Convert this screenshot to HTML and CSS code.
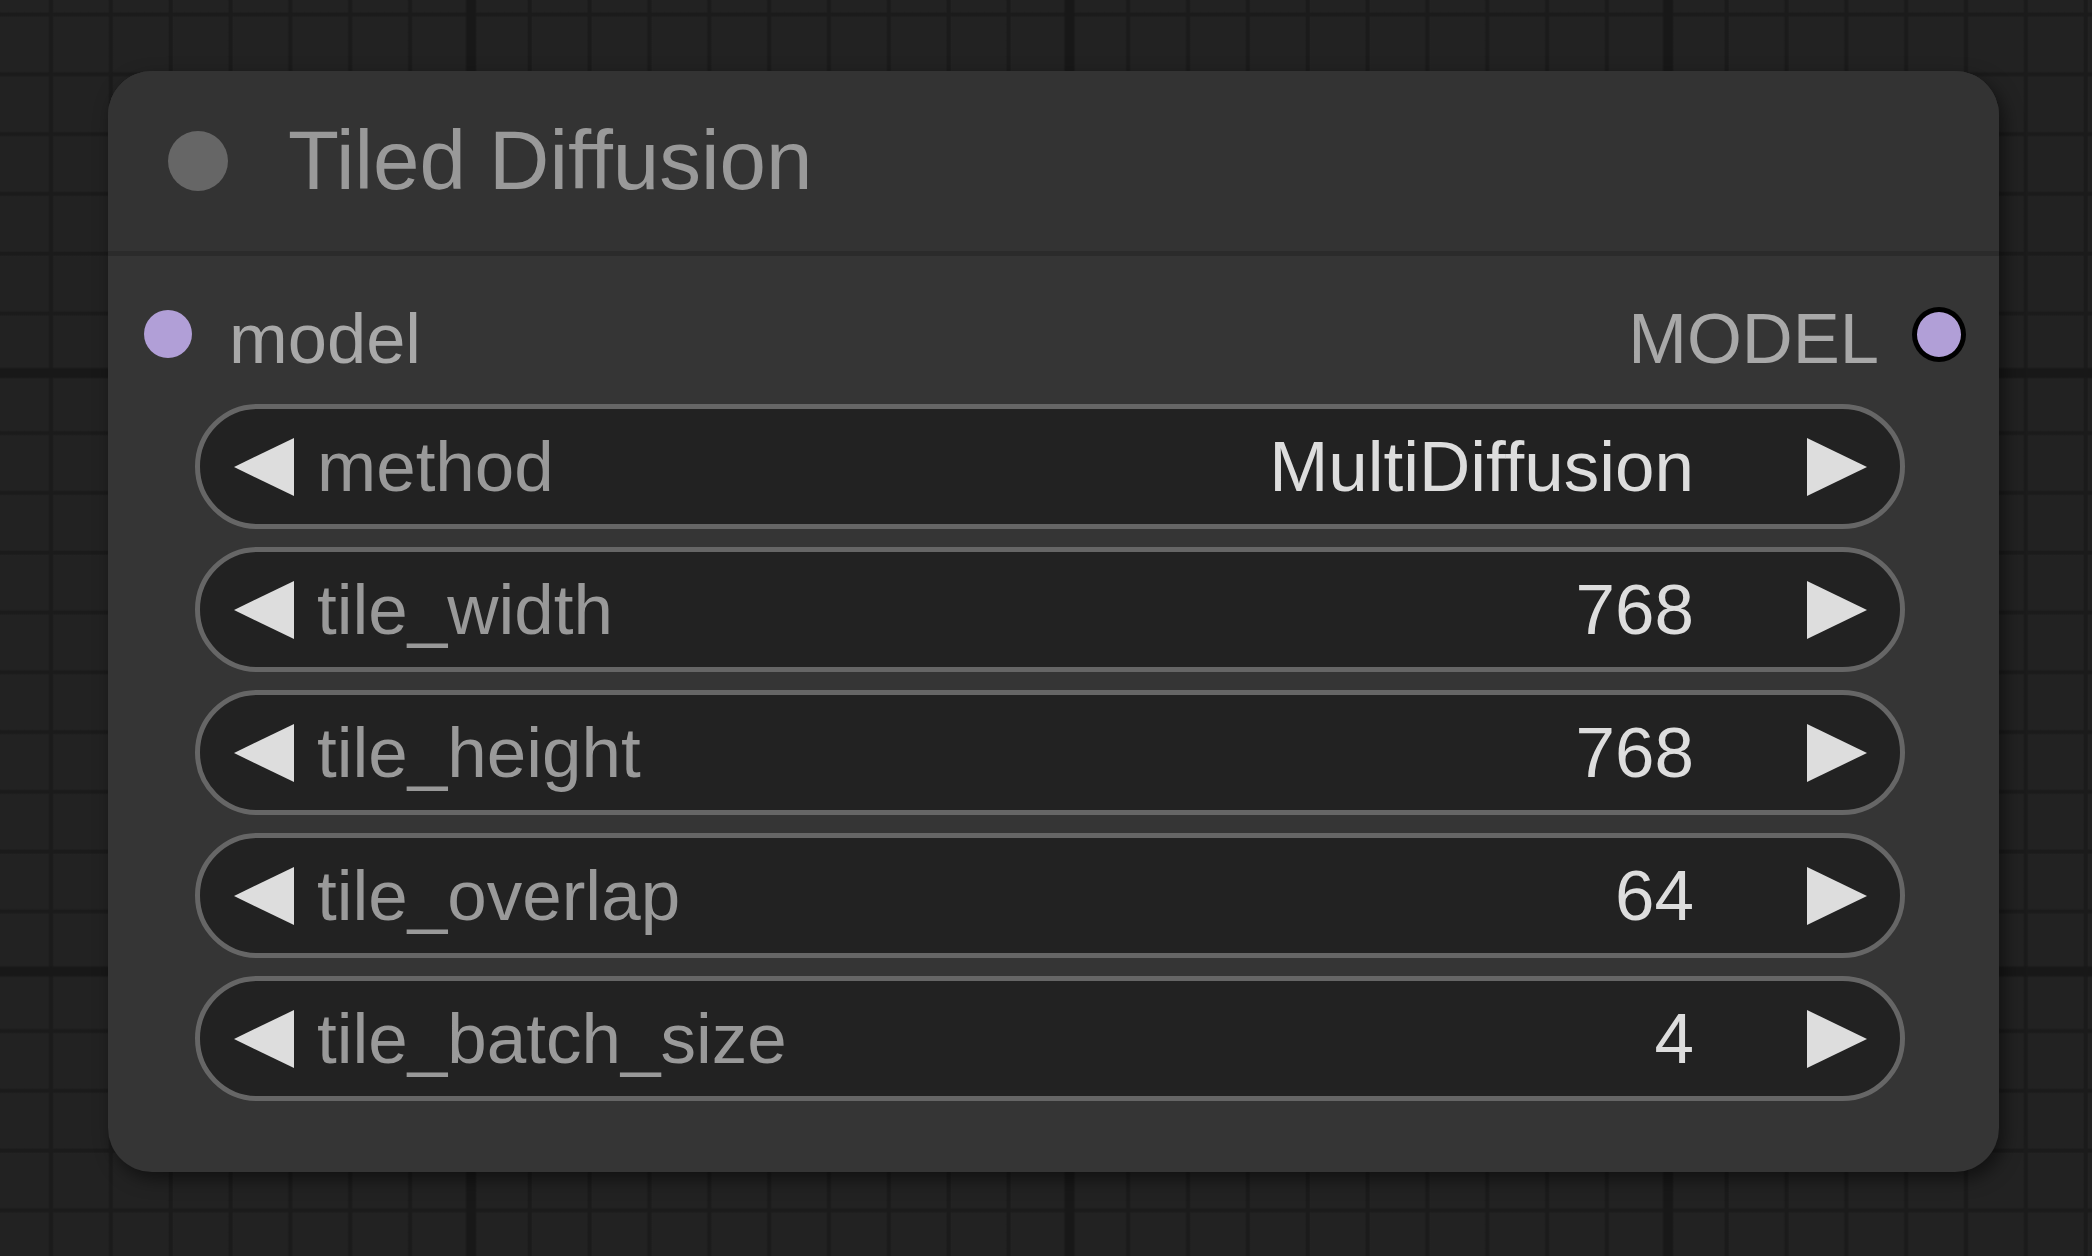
FILE: index.html
```html
<!DOCTYPE html>
<html>
<head>
<meta charset="utf-8">
<title>Tiled Diffusion</title>
<link rel="stylesheet" href="styles.css">
</head>
<body>
<div class="stage">
  <div class="node">
    <div class="node-header">
      <span class="node-dot"></span>
      <span class="node-title">Tiled Diffusion</span>
    </div>
    <div class="node-body">
      <div class="slots">
        <div class="slot">
          <span class="slot-dot"></span>
          <span class="slot-label">model</span>
        </div>
        <div class="slot slot-out">
          <span class="slot-label">MODEL</span>
          <span class="slot-dot slot-dot-out"></span>
        </div>
      </div>
      <div class="widgets">
        <div class="widget">
          <svg class="arrow" viewBox="0 0 60 58"><polygon points="60,0 0,29 60,58"/></svg>
          <span class="w-label">method</span>
          <span class="w-value">MultiDiffusion</span>
          <svg class="arrow" viewBox="0 0 60 58"><polygon points="0,0 60,29 0,58"/></svg>
        </div>
        <div class="widget">
          <svg class="arrow" viewBox="0 0 60 58"><polygon points="60,0 0,29 60,58"/></svg>
          <span class="w-label">tile_width</span>
          <span class="w-value">768</span>
          <svg class="arrow" viewBox="0 0 60 58"><polygon points="0,0 60,29 0,58"/></svg>
        </div>
        <div class="widget">
          <svg class="arrow" viewBox="0 0 60 58"><polygon points="60,0 0,29 60,58"/></svg>
          <span class="w-label">tile_height</span>
          <span class="w-value">768</span>
          <svg class="arrow" viewBox="0 0 60 58"><polygon points="0,0 60,29 0,58"/></svg>
        </div>
        <div class="widget">
          <svg class="arrow" viewBox="0 0 60 58"><polygon points="60,0 0,29 60,58"/></svg>
          <span class="w-label">tile_overlap</span>
          <span class="w-value">64</span>
          <svg class="arrow" viewBox="0 0 60 58"><polygon points="0,0 60,29 0,58"/></svg>
        </div>
        <div class="widget">
          <svg class="arrow" viewBox="0 0 60 58"><polygon points="60,0 0,29 60,58"/></svg>
          <span class="w-label">tile_batch_size</span>
          <span class="w-value">4</span>
          <svg class="arrow" viewBox="0 0 60 58"><polygon points="0,0 60,29 0,58"/></svg>
        </div>
      </div>
    </div>
  </div>
</div>
</body>
</html>
```
FILE: styles.css
```css
html, body {
  margin: 0;
  padding: 0;
}
body {
  width: 2092px;
  height: 1256px;
  overflow: hidden;
  font-family: "Liberation Sans", Arial, sans-serif;
  background-color: #222222;
  background-image:
    linear-gradient(90deg, transparent 0, #181818 2px, #181818 10px, transparent 12px),
    linear-gradient(180deg, transparent 0, #181818 2px, #181818 10px, transparent 12px),
    linear-gradient(90deg, transparent 0, #1b1b1b 1.5px, #1b1b1b 4px, transparent 5.5px),
    linear-gradient(180deg, transparent 0, #1b1b1b 1.5px, #1b1b1b 4px, transparent 5.5px);
  background-size: 598.5px 100%, 100% 598.5px, 59.85px 100%, 100% 59.8px;
  background-position: 465px 0, 0 367px, 48.3px 0, 0 11.8px;
}
.stage {
  padding: 71px 0 0 108px;
}
.node {
  width: 1891px;
  height: 1101px;
  box-sizing: border-box;
  border-radius: 44px;
  background: #353535;
  box-shadow: 5px 7px 18px rgba(0, 0, 0, 0.5);
  overflow: hidden;
}
.node-header {
  height: 180px;
  border-bottom: 5px solid #2b2b2b;
  background: #333333;
  display: flex;
  align-items: center;
  padding-left: 60px;
  gap: 60px;
}
.node-dot {
  width: 60px;
  height: 60px;
  border-radius: 50%;
  background: #666666;
  flex: none;
}
.node-title {
  font-size: 83.5px;
  line-height: 1;
  color: #999999;
  white-space: nowrap;
}
.node-body {
  padding-top: 48px;
}
.slots {
  height: 60px;
  display: flex;
  align-items: center;
  justify-content: space-between;
  padding: 0 33px 0 36px;
}
.slot {
  display: flex;
  align-items: center;
  gap: 37px;
}
.slot-out {
  gap: 33px;
}
.slot-dot {
  width: 48px;
  height: 48px;
  border-radius: 50%;
  background: #b19fd7;
  flex: none;
}
.slot-dot-out {
  width: 54px;
  height: 55px;
  box-sizing: border-box;
  border: 5px solid #000000;
}
.slot-label {
  font-size: 70.5px;
  line-height: 1;
  color: #a8a8a8;
  padding-top: 10px;
  white-space: nowrap;
}
.widgets {
  margin-top: 40px;
  padding-left: 87px;
  width: 1710px;
  display: flex;
  flex-direction: column;
  gap: 18px;
}
.widget {
  height: 125px;
  box-sizing: border-box;
  border: 5px solid #666666;
  border-radius: 63px;
  background: #222222;
  display: flex;
  align-items: center;
  padding: 0 33px 0 34px;
}
.arrow {
  width: 60px;
  height: 58px;
  flex: none;
  fill: #dddddd;
}
.w-label {
  margin-left: 23px;
  font-size: 71px;
  line-height: 1;
  color: #999999;
  white-space: nowrap;
}
.w-value {
  margin-left: auto;
  margin-right: 113px;
  font-size: 71px;
  line-height: 1;
  color: #dddddd;
  white-space: nowrap;
}
```
